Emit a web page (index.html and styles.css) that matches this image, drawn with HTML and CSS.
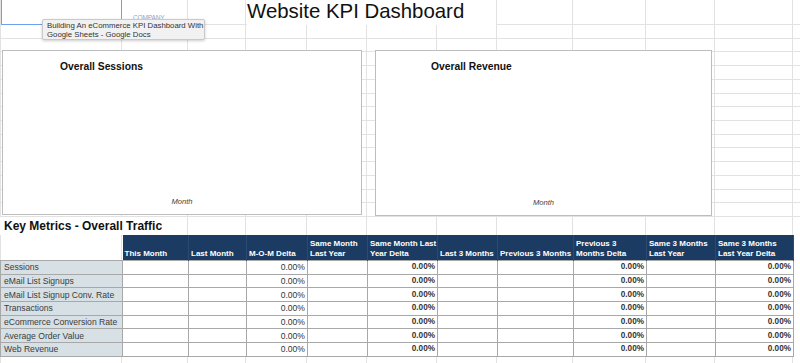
FILE: index.html
```html
<!DOCTYPE html>
<html lang="en">
<head>
  <meta charset="UTF-8" />
  <meta name="viewport" content="width=device-width, initial-scale=1.0"/>
  <title>Website KPI Dashboard</title>
  <link rel="stylesheet" href="styles.css">
</head>
<body>
  <div class="sheet">
    <div class="title-row">
      <div class="cell-a1"></div>
      <span class="company">COMPANY</span>
      <h1 class="sheet-title">Website KPI Dashboard</h1>
    </div>

    <div class="chart-area">
      <div class="chart chart-sessions">
        <h2>Overall Sessions</h2>
        <span class="axis">Month</span>
      </div>
      <div class="chart chart-revenue">
        <h2>Overall Revenue</h2>
        <span class="axis">Month</span>
      </div>
    </div>

    <div class="section-row">
      <h3>Key Metrics - Overall Traffic</h3>
    </div>

    <table class="kpi">
      <colgroup>
        <col style="width:122px"><col style="width:66px"><col style="width:58px"><col style="width:61px">
        <col style="width:60px"><col style="width:70px"><col style="width:60px"><col style="width:76px">
        <col style="width:73px"><col style="width:69px"><col style="width:78px">
      </colgroup>
      <thead>
        <tr>
          <th class="corner"></th>
          <th>This Month</th>
          <th>Last Month</th>
          <th>M-O-M Delta</th>
          <th>Same Month<br>Last Year</th>
          <th>Same Month Last<br>Year Delta</th>
          <th>Last 3 Months</th>
          <th>Previous 3 Months</th>
          <th>Previous 3<br>Months Delta</th>
          <th>Same 3 Months<br>Last Year</th>
          <th>Same 3 Months<br>Last Year Delta</th>
        </tr>
      </thead>
      <tbody id="kpi-rows"></tbody>
    </table>

    <div class="bottom-row">
      <div class="chart-stub stub-left"></div>
      <div class="chart-stub stub-right"></div>
    </div>

    <div class="tooltip">Building An eCommerce KPI Dashboard With<br>Google Sheets - Google Docs</div>
  </div>

  <script>
    const metrics = [
      'Sessions',
      'eMail List Signups',
      'eMail List Signup Conv. Rate',
      'Transactions',
      'eCommerce Conversion Rate',
      'Average Order Value',
      'Web Revenue'
    ];

    function renderRows() {
      const body = document.getElementById('kpi-rows');
      metrics.forEach((name) => {
        const row = document.createElement('tr');
        row.innerHTML = `
          <td class="label">${name}</td>
          <td></td><td></td>
          <td class="num">0.00%</td>
          <td></td>
          <td class="num strong">0.00%</td>
          <td></td><td></td>
          <td class="num strong">0.00%</td>
          <td></td>
          <td class="num strong">0.00%</td>
        `;
        body.appendChild(row);
      });
    }

    renderRows();
  </script>
</body>
</html>
```

FILE: styles.css
```css
body {
  margin: 0;
  background: #ffffff;
  font-family: "Liberation Sans", Arial, sans-serif;
  color: #222;
  overflow: hidden;
}

.sheet {
  --g: linear-gradient(#e2e2e2, #e2e2e2);
  position: relative;
  width: 800px;
  height: 363px;
  overflow: hidden;
  background-image: var(--g), var(--g), var(--g), var(--g), var(--g), var(--g),
    var(--g), var(--g), var(--g), var(--g), var(--g), var(--g);
  background-size: 1px 100%;
  background-repeat: no-repeat;
  background-position: 0 0, 121px 0, 187px 0, 245px 0, 306px 0, 366px 0,
    436px 0, 496px 0, 572px 0, 645px 0, 714px 0, 792px 0;
}

/* row 1 */
.title-row {
  display: grid;
  grid-template-columns: 122px 66px 58px 61px 60px 70px 60px 76px 73px 69px 78px 1fr;
  height: 25px;
  border-bottom: 1px solid #e2e2e2;
  box-sizing: border-box;
}

.cell-a1 {
  grid-column: 1;
  margin-left: 1px;
  border-left: 1px solid #6b9ff2;
  border-right: 1px solid #6b9ff2;
  border-bottom: 1px solid #6b9ff2;
  height: 25px;
  box-sizing: border-box;
  background: #fff;
}

.company {
  grid-column: 2;
  align-self: end;
  padding: 0 0 4px 11px;
  font-size: 6.6px;
  letter-spacing: -0.2px;
  color: #93a7c8;
}

.sheet-title {
  grid-column: 4 / 8;
  margin: 0 1px 0 1px;
  background: #fff;
  font-size: 20.4px;
  font-weight: normal;
  line-height: 23px;
  color: #111;
  white-space: nowrap;
}

/* chart block */
.chart-area {
  position: relative;
  height: 192px;
  background-image: repeating-linear-gradient(to bottom, transparent 0 12.714px, #e2e2e2 12.714px 13.714px);
}

.chart {
  position: absolute;
  top: 25px;
  display: flex;
  flex-direction: column;
  justify-content: space-between;
  background: #fff;
  border: 1px solid #bdbdbd;
  box-sizing: border-box;
}

.chart-sessions {
  left: 2px;
  width: 360px;
  height: 165px;
}

.chart-revenue {
  left: 375px;
  width: 337px;
  height: 166px;
}

.chart h2 {
  margin: 0;
  padding: 10px 0 0 57px;
  font-size: 10.3px;
  line-height: 12px;
  color: #111;
}

.chart-revenue h2 {
  padding-left: 55px;
}

.axis {
  align-self: center;
  margin-bottom: 8px;
  font-size: 7.6px;
  font-style: italic;
  line-height: 9px;
  color: #444;
}

.section-row {
  height: 18px;
}

.section-row h3 {
  margin: 0;
  width: 183px;
  padding-left: 4px;
  background: #fff;
  font-size: 12px;
  line-height: 18px;
  color: #111;
}

/* metrics table */
.kpi {
  width: 793px;
  table-layout: fixed;
  border-collapse: collapse;
}

.kpi th {
  height: 24px;
  padding: 0 2px 1px 2px;
  background: #1c3b62;
  border-right: 1px solid #2c4a70;
  color: #fff;
  font-size: 8px;
  line-height: 10px;
  text-align: left;
  vertical-align: bottom;
  white-space: nowrap;
  overflow: hidden;
}

.kpi th.corner {
  background: transparent;
  border-right: none;
}

.kpi td {
  height: 12.7px;
  padding: 0 2px;
  background: #fff;
  border: 1px solid #a8a8a8;
  font-size: 8.6px;
  line-height: 12px;
  white-space: nowrap;
  overflow: hidden;
}

.kpi td.label {
  padding-left: 3px;
  background: #d7e0e4;
  color: #3c3c3c;
}

.kpi td.num {
  text-align: right;
  color: #333;
}

.kpi td.strong {
  font-weight: bold;
  font-size: 8.2px;
}

.bottom-row {
  display: flex;
  padding-top: 6px;
}

.chart-stub {
  height: 12px;
  background: #fff;
  border: 1px solid #bdbdbd;
  box-sizing: border-box;
}

.stub-left {
  margin-left: 1px;
  width: 366px;
}

.stub-right {
  margin-left: 15px;
  width: 328px;
}

.tooltip {
  position: absolute;
  left: 42px;
  top: 19px;
  width: 163px;
  height: 21px;
  box-sizing: border-box;
  padding: 1px 4px;
  background: #f1f1f1;
  border: 1px solid #c9c9c9;
  border-radius: 2px;
  box-shadow: 0 1px 3px rgba(0, 0, 0, 0.2);
  font-size: 7.8px;
  line-height: 9.2px;
  color: #333;
  white-space: nowrap;
}
```
